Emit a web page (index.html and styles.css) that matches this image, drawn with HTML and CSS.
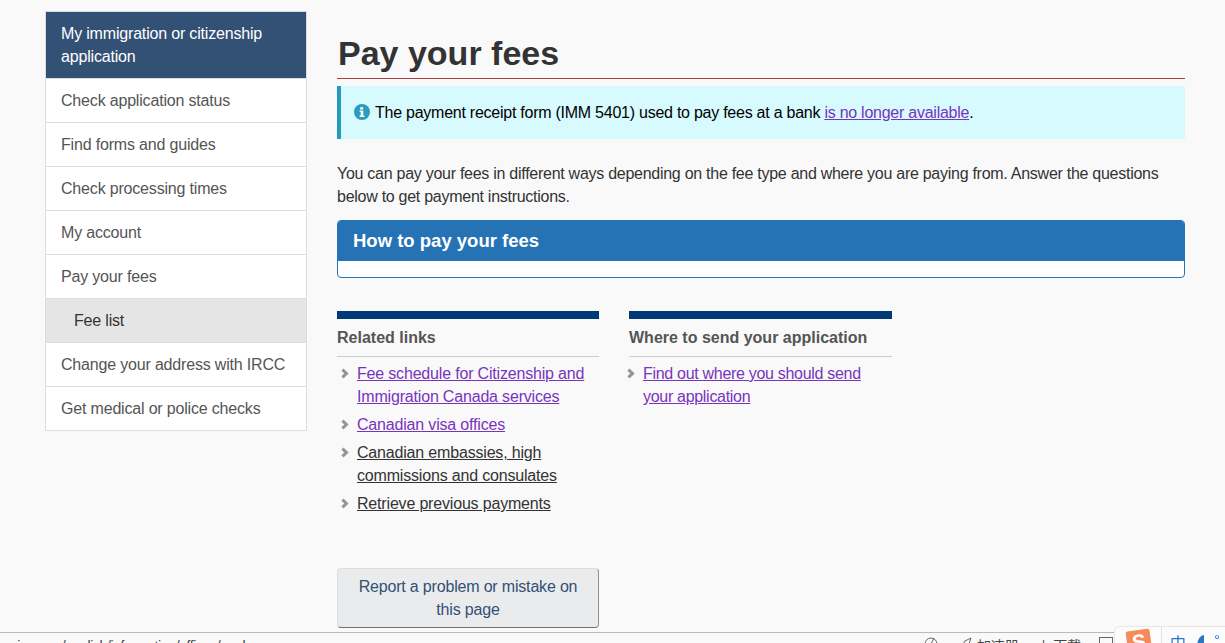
FILE: index.html
```html
<!DOCTYPE html>
<html lang="en">
<head>
<meta charset="utf-8">
<title>Pay your fees</title>
<link rel="stylesheet" href="styles.css">
</head>
<body>
<div class="page">
  <nav class="side">
    <a class="side-head">My immigration or citizenship application</a>
    <a class="side-item">Check application status</a>
    <a class="side-item">Find forms and guides</a>
    <a class="side-item">Check processing times</a>
    <a class="side-item">My account</a>
    <a class="side-item">Pay your fees</a>
    <a class="side-item side-sub">Fee list</a>
    <a class="side-item">Change your address with IRCC</a>
    <a class="side-item">Get medical or police checks</a>
  </nav>
  <main class="main">
    <h1 class="title">Pay your fees</h1>
    <div class="notice">
      <svg class="info" viewBox="0 0 16 16" width="16" height="16"><circle cx="8" cy="8" r="8" fill="#2a9cbd"/><path d="M6.2 3.2h3v2.2h-3zM5.6 6.5h3.7v5h1.1v1.5H5.6v-1.5h1.1V8H5.6z" fill="#fff"/></svg>
      <span>The payment receipt form (IMM 5401) used to pay fees at a bank <a class="visited" href="#">is no longer available</a>.</span>
    </div>
    <p class="intro">You can pay your fees in different ways depending on the fee type and where you are paying from. Answer the questions below to get payment instructions.</p>
    <section class="panel">
      <h2 class="panel-head">How to pay your fees</h2>
      <div class="panel-body"></div>
    </section>
    <div class="cols">
      <section class="col">
        <h3 class="col-head">Related links</h3>
        <ul class="links">
          <li><a class="visited" href="#">Fee schedule for Citizenship and Immigration Canada services</a></li>
          <li><a class="visited" href="#">Canadian visa offices</a></li>
          <li><a class="plain" href="#">Canadian embassies, high commissions and consulates</a></li>
          <li><a class="plain" href="#">Retrieve previous payments</a></li>
        </ul>
      </section>
      <section class="col">
        <h3 class="col-head">Where to send your application</h3>
        <ul class="links">
          <li><a class="visited" href="#">Find out where you should send your application</a></li>
        </ul>
      </section>
    </div>
    <button class="report" type="button">Report a problem or mistake on this page</button>
  </main>
</div>
<footer class="status">
  <span class="status-url">.cic.gc.ca/english/information/offices/apply.asp</span>
  <div class="status-tools">
    <svg class="tool-ico" viewBox="0 0 14 14" width="14" height="14"><circle cx="7" cy="8" r="6" fill="none" stroke="#666"/><path d="M7 8l3-6" stroke="#666"/></svg>
    <svg class="tool-ico rocket" viewBox="0 0 14 14" width="14" height="14"><path d="M2 10l3-5 6-3-2 6-4 3z" fill="none" stroke="#666"/></svg>
    <span class="tool-text">加速器</span>
    <span class="tool-text dl">↓ 下载</span>
    <span class="tool-box"></span>
  </div>
  <div class="ime">
    <div class="ime-logo"><span>S</span></div>
    <span class="ime-zh">中</span>
    <span class="ime-moon"></span>
    <span class="ime-dots">°,</span>
  </div>
</footer>
</body>
</html>
```
FILE: styles.css
```css
html, body { margin: 0; padding: 0; height: 100%; overflow: hidden; }
body {
  background: #f9f9f9;
  color: #333;
  font: 16px/23px "Liberation Sans", Arial, sans-serif;
  letter-spacing: -0.18px;
  position: relative;
}
.page {
  display: flex;
  align-items: flex-start;
  gap: 30px;
  padding: 11px 40px 0 45px;
}
.side {
  flex: 0 0 262px;
  box-sizing: border-box;
  border: 1px solid #ddd;
  background: #fff;
  display: flex;
  flex-direction: column;
}
.side-head {
  background: #335075;
  color: #fff;
  padding: 10px 15px;
  border-bottom: 1px solid #ddd;
  height: 46px;
}
.side-item {
  color: #555;
  height: 43px;
  line-height: 43px;
  padding-left: 15px;
  border-bottom: 1px solid #ddd;
}
.side-item:last-child { border-bottom: 0; }
.side-sub { background: #e5e5e5; color: #333; padding-left: 28px; }
.main { flex: 1; min-width: 0; }
.title {
  margin: 0;
  padding-top: 19px;
  height: 48px;
  border-bottom: 1px solid #af3c43;
  font-size: 34px;
  line-height: 46px;
  font-weight: 700;
  color: #333;
  letter-spacing: 0;
  text-indent: 1px;
}
.notice {
  margin-top: 7px;
  height: 53px;
  box-sizing: border-box;
  background: #d7faff;
  border-left: 4px solid #269abc;
  padding: 15px 0 0 13px;
  color: #000;
  display: flex;
  gap: 5px;
  letter-spacing: -0.25px;
}
.info { margin-top: 3px; flex: none; }
.visited { color: #7834bc; text-decoration: underline; }
.plain { color: #333; text-decoration: underline; }
.intro { margin: 23px 0 0; color: #333; letter-spacing: -0.27px; }
.panel {
  margin-top: 12px;
  border: 1px solid #2572b4;
  border-radius: 4px;
  background: #fff;
  overflow: hidden;
}
.panel-head {
  margin: 0;
  background: #2572b4;
  color: #fff;
  height: 40px;
  padding: 8px 15px 0;
  box-sizing: border-box;
  font-size: 18.5px;
  line-height: 23px;
  font-weight: 700;
  letter-spacing: 0;
}
.panel-body { height: 16px; }
.cols { display: flex; gap: 30px; margin-top: 33px; }
.col { flex: 0 0 262px; }
.col + .col { flex-basis: 263px; }
.col-head {
  margin: 0;
  border-top: 8px solid #003b77;
  border-bottom: 1px solid #ccc;
  height: 30px;
  padding-top: 7px;
  color: #555;
  font-size: 16px;
  line-height: 23px;
  font-weight: 700;
  letter-spacing: 0;
}
.links { list-style: none; margin: 5px 0 0; padding: 0 0 0 20px; }
.col + .col .links { padding-left: 14px; letter-spacing: -0.3px; }
.links li { position: relative; margin-bottom: 5px; }
.links li::before {
  content: "";
  position: absolute;
  left: -17px;
  top: 8px;
  width: 4px;
  height: 4px;
  border-top: 3px solid #959595;
  border-right: 3px solid #959595;
  transform: rotate(45deg);
}
.report {
  display: block;
  margin-top: 48px;
  width: 262px;
  height: 60px;
  box-sizing: border-box;
  background: #eaebed;
  border: 1px solid #dcdee1;
  border-right-color: #8d8f92;
  border-bottom-color: #6f7174;
  border-radius: 4px;
  color: #335075;
  font: 16px/23px "Liberation Sans", Arial, sans-serif;
  letter-spacing: -0.18px;
  padding: 6px 12px;
}
.status {
  position: absolute;
  left: 0;
  right: 0;
  bottom: 0;
  height: 10px;
  background: #f9f9f9;
  border-top: 1px solid #bbb;
  overflow: hidden;
  font-size: 14px;
  line-height: 20px;
  color: #444;
}
.status-url { position: absolute; left: 7px; top: 3px; white-space: nowrap; letter-spacing: -0.37px; }
.status-tools {
  position: absolute;
  left: 924px;
  top: 3px;
  display: flex;
  align-items: flex-start;
  gap: 10px;
}
.rocket { margin-left: 12px; }
.tool-text { margin-left: -7px; margin-top: -1px; white-space: nowrap; font-family: "Noto Sans CJK SC", sans-serif; }
.dl { margin-left: 8px; }
.tool-box { width: 12px; height: 12px; border: 1px solid #666; margin-left: 8px; margin-top: 1px; }
.ime {
  position: fixed;
  left: 1114px;
  top: 626px;
  width: 111px;
  height: 17px;
  box-sizing: border-box;
  background: #fcfcfc;
  border: 1px solid #e8e8e8;
  border-width: 1px 0 0 1px;
  border-top-left-radius: 6px;
  overflow: hidden;
}
.ime::after {
  content: "";
  position: absolute;
  left: 46px;
  top: 0;
  width: 1px;
  height: 17px;
  background: #f2dcd8;
}
.ime-logo {
  position: absolute;
  left: 12px;
  top: 3px;
  width: 24px;
  height: 24px;
  background: #f58a5b;
  transform: rotate(-8deg);
  border-radius: 2px;
  text-align: center;
  color: #fff;
  font: 700 21px/24px "Liberation Sans", sans-serif;
}
.ime-zh { position: absolute; left: 55px; top: 5px; color: #2a78c4; font: 16px/20px "Noto Sans CJK SC", sans-serif; }
.ime-moon { position: absolute; left: 82px; top: 8px; width: 7px; height: 12px; background: #2a78c4; border-radius: 100% 0 0 0; }
.ime-dots { position: absolute; left: 99px; top: 3px; color: #2a78c4; font-size: 15px; }
```
